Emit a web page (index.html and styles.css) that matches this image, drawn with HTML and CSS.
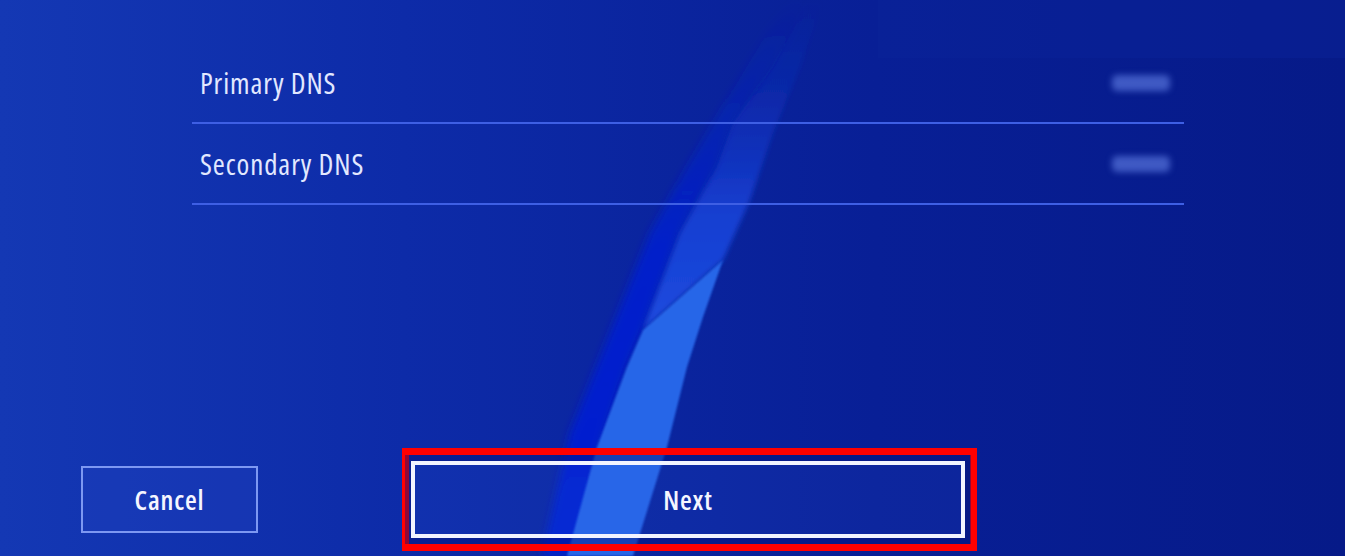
FILE: index.html
```html
<!DOCTYPE html>
<html lang="en">
<head>
<meta charset="utf-8">
<title>DNS Settings</title>
<link rel="stylesheet" href="styles.css">
</head>
<body>
<div class="screen">
  <svg class="backdrop" viewBox="0 0 1345 556" preserveAspectRatio="none" aria-hidden="true">
    <defs>
      <linearGradient id="base" x1="0" y1="0" x2="1" y2="0">
        <stop offset="0" stop-color="#1438b4"/>
        <stop offset="0.3" stop-color="#0d2ba8"/>
        <stop offset="0.65" stop-color="#081f96"/>
        <stop offset="1" stop-color="#061a88"/>
      </linearGradient>
      <linearGradient id="mid" x1="0" y1="0" x2="0" y2="1">
        <stop offset="0" stop-color="#1236cc" stop-opacity="0"/>
        <stop offset="0.3" stop-color="#1438d0" stop-opacity="0.3"/>
        <stop offset="0.65" stop-color="#1844da" stop-opacity="0.85"/>
        <stop offset="1" stop-color="#1c4be0"/>
      </linearGradient>
      <linearGradient id="deep" x1="0" y1="0" x2="0" y2="1">
        <stop offset="0" stop-color="#0a24c8" stop-opacity="0"/>
        <stop offset="0.2" stop-color="#0822cc" stop-opacity="0.4"/>
        <stop offset="0.45" stop-color="#061ecf" stop-opacity="0.9"/>
        <stop offset="1" stop-color="#0620d2"/>
      </linearGradient>
      <filter id="soft" x="-20%" y="-20%" width="140%" height="140%">
        <feGaussianBlur stdDeviation="4"/>
      </filter>
      <filter id="mids" x="-20%" y="-20%" width="140%" height="140%">
        <feGaussianBlur stdDeviation="2.5"/>
      </filter>
      <filter id="softer" x="-20%" y="-20%" width="140%" height="140%">
        <feGaussianBlur stdDeviation="1.2"/>
      </filter>
    </defs>
    <rect width="1345" height="556" fill="url(#base)"/>
    <rect x="878" y="0" width="467" height="58" fill="#0b2498" opacity="0.45"/>
    <!-- deep saturated swoosh -->
    <path d="M792 0 L767 33 L727 100 L687 167 L650 233 L610 333 L570 433 L542 556 L580 556 L600 447 L627 367 L643 330 L680 233 L717 167 L733 123 L773 67 L800 17 L806 0 Z" fill="url(#deep)" filter="url(#soft)"/>
    <!-- medium band -->
    <path d="M806 0 L800 17 L773 67 L733 123 L717 167 L680 233 L643 330 L723 260 L750 200 L773 133 L800 67 L817 17 L822 0 Z" fill="url(#mid)" filter="url(#mids)"/>
    <!-- bright band -->
    <path d="M723 260 L643 330 L627 367 L597 447 L567 556 L633 556 L667 447 L687 367 L703 317 Z" fill="#2566e8" filter="url(#softer)"/>
  </svg>

  <div class="content">
    <ul class="list">
      <li class="row">
        <span class="label">Primary DNS</span>
        <span class="value"></span>
      </li>
      <li class="row">
        <span class="label">Secondary DNS</span>
        <span class="value"></span>
      </li>
    </ul>

    <div class="footer">
      <button class="btn btn-cancel" type="button">Cancel</button>
      <div class="highlight">
        <button class="btn btn-next" type="button">Next</button>
      </div>
    </div>
  </div>
</div>
</body>
</html>
```

FILE: styles.css
```css
html, body {
  margin: 0;
  padding: 0;
}

body {
  width: 1345px;
  height: 556px;
  overflow: hidden;
  background: #0a2aa6;
  font-family: "Open Sans", "Noto Sans", "Liberation Sans", sans-serif;
  font-stretch: 75%;
}

.screen {
  position: relative;
  width: 1345px;
  height: 556px;
  overflow: hidden;
}

.backdrop {
  position: absolute;
  inset: 0;
  width: 100%;
  height: 100%;
  display: block;
}

.content {
  position: relative;
  height: 100%;
  display: flex;
  flex-direction: column;
}

.list {
  list-style: none;
  margin: 43px 0 0 192px;
  padding: 0;
  width: 992px;
}

.row {
  height: 79px;
  display: flex;
  align-items: center;
  justify-content: space-between;
  padding: 0 14px 0 8px;
  border-bottom: 2px solid #3e5fe4;
}

.label {
  color: #e2e8ff;
  font-size: 29px;
  font-weight: 380;
  letter-spacing: 0.9px;
  padding-top: 0;
}

.value {
  width: 58px;
  height: 16px;
  border-radius: 5px;
  background: rgba(110, 140, 240, 0.55);
  filter: blur(3px);
}

.footer {
  margin-top: auto;
  margin-bottom: 5px;
  display: flex;
  align-items: center;
  padding-left: 81px;
  gap: 144px;
}

.btn {
  font-family: inherit;
  font-stretch: 75%;
  font-weight: 600;
  letter-spacing: 0.8px;
  color: #f4f6ff;
  font-size: 27px;
  background: transparent;
  cursor: pointer;
  padding: 0;
  margin: 0;
}

.btn-cancel {
  width: 177px;
  height: 67px;
  border: 2px solid #7d98f2;
  background: rgba(40, 70, 200, 0.25);
}

.highlight {
  border: 7px solid #ff0000;
  padding: 6px 5px 6px 2px;
}

.btn-next {
  display: block;
  width: 554px;
  height: 77px;
  border: 4px solid #f2f4ff;
  background: rgba(60, 110, 240, 0.1);
  box-shadow: 0 0 0 6px rgba(4, 18, 120, 0.45);
}
```
